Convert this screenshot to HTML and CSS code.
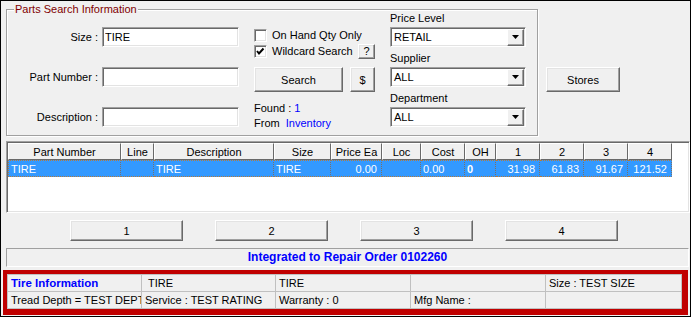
FILE: index.html
```html
<!DOCTYPE html>
<html lang="en">
<head>
    <meta charset="UTF-8">
    <title>Parts Search</title>
    <link rel="stylesheet" href="styles.css">
</head>
<body>
    <div class="window">
        <div class="top">
            <div class="groupbox">
                <span class="legend">Parts Search Information</span>

                <div class="fields">
                    <div class="field-row">
                        <label for="sizeInput">Size :</label>
                        <input type="text" id="sizeInput" class="text-input" value="TIRE">
                    </div>
                    <div class="field-row">
                        <label for="partInput">Part Number :</label>
                        <input type="text" id="partInput" class="text-input">
                    </div>
                    <div class="field-row">
                        <label for="descInput">Description :</label>
                        <input type="text" id="descInput" class="text-input">
                    </div>
                </div>

                <div class="options">
                    <div class="check-row">
                        <span class="checkbox"></span>
                        <span>On Hand Qty Only</span>
                    </div>
                    <div class="check-row">
                        <span class="checkbox">
                            <svg width="11" height="11" viewBox="0 0 11 11"><polyline points="2,5 4,7.5 8.5,2.5" fill="none" stroke="#000" stroke-width="2"/></svg>
                        </span>
                        <span>Wildcard Search</span>
                        <button class="btn btn-help">?</button>
                    </div>
                    <div class="search-row">
                        <button class="btn btn-search">Search</button>
                        <button class="btn btn-dollar">$</button>
                    </div>
                    <div class="found">Found : <span class="blue">1</span></div>
                    <div class="found">From &nbsp;<span class="blue">Inventory</span></div>
                </div>

                <div class="filters">
                    <div class="filter-label">Price Level</div>
                    <div class="combo">
                        <span class="combo-text">RETAIL</span>
                        <span class="combo-btn"><svg width="7" height="4" viewBox="0 0 7 4"><polygon points="0,0 7,0 3.5,4" fill="#000"/></svg></span>
                    </div>
                    <div class="filter-label">Supplier</div>
                    <div class="combo">
                        <span class="combo-text">ALL</span>
                        <span class="combo-btn"><svg width="7" height="4" viewBox="0 0 7 4"><polygon points="0,0 7,0 3.5,4" fill="#000"/></svg></span>
                    </div>
                    <div class="filter-label">Department</div>
                    <div class="combo">
                        <span class="combo-text">ALL</span>
                        <span class="combo-btn"><svg width="7" height="4" viewBox="0 0 7 4"><polygon points="0,0 7,0 3.5,4" fill="#000"/></svg></span>
                    </div>
                </div>
            </div>
            <button class="btn btn-stores">Stores</button>
        </div>

        <div class="grid">
            <table class="parts-table">
                <colgroup>
                    <col style="width:113px"><col style="width:33px"><col style="width:120px"><col style="width:57px">
                    <col style="width:51px"><col style="width:39px"><col style="width:44px"><col style="width:31px">
                    <col style="width:44px"><col style="width:44px"><col style="width:44px"><col style="width:44px">
                </colgroup>
                <thead>
                    <tr>
                        <th>Part Number</th><th>Line</th><th>Description</th><th>Size</th>
                        <th>Price Ea</th><th>Loc</th><th>Cost</th><th>OH</th>
                        <th>1</th><th>2</th><th>3</th><th>4</th>
                    </tr>
                </thead>
                <tbody>
                    <tr class="selected">
                        <td>TIRE</td><td></td><td>TIRE</td><td>TIRE</td>
                        <td class="num">0.00</td><td></td><td>0.00</td><td class="bold">0</td>
                        <td class="num">31.98</td><td class="num">61.83</td><td class="num">91.67</td><td class="num">121.52</td>
                    </tr>
                </tbody>
            </table>
        </div>

        <div class="price-buttons">
            <button class="btn btn-price">1</button>
            <button class="btn btn-price">2</button>
            <button class="btn btn-price">3</button>
            <button class="btn btn-price">4</button>
        </div>

        <div class="status">Integrated to Repair Order 0102260</div>

        <div class="tire-frame">
            <table class="tire-table">
                <colgroup>
                    <col style="width:134px"><col style="width:134px"><col style="width:135px"><col style="width:135px"><col style="width:136px">
                </colgroup>
                <tr>
                    <td class="tire-title">Tire Information</td>
                    <td>&nbsp;TIRE</td>
                    <td>TIRE</td>
                    <td></td>
                    <td>Size : TEST SIZE</td>
                </tr>
                <tr>
                    <td>Tread Depth = TEST DEPTH</td>
                    <td>Service : TEST RATING</td>
                    <td>Warranty : 0</td>
                    <td>Mfg Name :</td>
                    <td></td>
                </tr>
            </table>
        </div>
    </div>
</body>
</html>
```

FILE: styles.css
```css
body {
    margin: 0;
    font-family: "Liberation Sans", Arial, sans-serif;
    font-size: 11px;
    color: #000;
}
.window {
    width: 691px;
    height: 317px;
    box-sizing: border-box;
    border: 1px solid #000;
    background: #f0f0f0;
    overflow: hidden;
}
.top {
    display: flex;
    align-items: flex-start;
}
.groupbox {
    position: relative;
    display: flex;
    margin: 8px 0 0 5px;
    width: 532px;
    height: 127px;
    box-sizing: border-box;
    border: 1px solid #a0a0a0;
    box-shadow: inset 1px 1px 0 #fff, 1px 1px 0 #fff;
}
.legend {
    position: absolute;
    top: -8px;
    left: 7px;
    padding: 0 1px;
    background: #f0f0f0;
    color: #800000;
    font-size: 11px;
    line-height: 14px;
}
.fields {
    display: flex;
    flex-direction: column;
    gap: 20px;
    padding-top: 17px;
}
.field-row {
    display: flex;
    align-items: center;
    gap: 4px;
    height: 20px;
}
.field-row label {
    width: 91px;
    text-align: right;
}
.text-input {
    width: 137px;
    height: 20px;
    box-sizing: border-box;
    margin: 0;
    padding: 0 2px;
    font-family: inherit;
    font-size: 11px;
    background: #fff;
    border: 1px solid;
    border-color: #a0a0a0 #fff #fff #a0a0a0;
    box-shadow: inset 1px 1px 0 #696969, inset -1px -1px 0 #e3e3e3;
    outline: none;
}
.btn {
    margin: 0;
    padding: 0;
    font-family: inherit;
    font-size: 11px;
    color: #000;
    background: #f0f0f0;
    box-sizing: border-box;
    border: 1px solid;
    border-color: #fff #696969 #696969 #fff;
    box-shadow: inset -1px -1px 0 #a0a0a0, inset 1px 1px 0 #e3e3e3;
    cursor: pointer;
}
.options {
    display: flex;
    flex-direction: column;
    width: 121px;
    margin-left: 15px;
    padding-top: 17px;
}
.check-row {
    display: flex;
    align-items: center;
    gap: 5px;
    height: 16px;
    white-space: nowrap;
}
.checkbox {
    display: flex;
    align-items: center;
    justify-content: center;
    flex: none;
    width: 13px;
    height: 13px;
    box-sizing: border-box;
    background: #fff;
    border: 1px solid;
    border-color: #a0a0a0 #fff #fff #a0a0a0;
    box-shadow: inset 1px 1px 0 #696969, inset -1px -1px 0 #e3e3e3;
}
.btn-help {
    margin-left: auto;
    flex: none;
    width: 17px;
    height: 15px;
    line-height: 12px;
}
.search-row {
    display: flex;
    margin-top: 8px;
    height: 25px;
}
.btn-search {
    width: 89px;
    height: 25px;
}
.btn-dollar {
    margin-left: auto;
    width: 25px;
    height: 25px;
}
.found {
    line-height: 15px;
}
.search-row + .found {
    margin-top: 9px;
}
.blue {
    color: #0000ff;
}
.filters {
    display: flex;
    flex-direction: column;
    width: 136px;
    margin-left: 15px;
    padding-top: 2px;
}
.filter-label {
    line-height: 13px;
    margin-bottom: 2px;
}
.combo + .filter-label {
    margin-top: 5px;
}
.combo {
    display: flex;
    align-items: center;
    height: 20px;
    box-sizing: border-box;
    background: #fff;
    border: 1px solid;
    border-color: #a0a0a0 #fff #fff #a0a0a0;
    box-shadow: inset 1px 1px 0 #696969, inset -1px -1px 0 #e3e3e3;
    padding: 1px;
}
.combo-text {
    flex: 1;
    padding-left: 2px;
}
.combo-btn {
    display: flex;
    align-items: center;
    justify-content: center;
    width: 17px;
    height: 17px;
    box-sizing: border-box;
    background: #f0f0f0;
    border: 1px solid;
    border-color: #fff #696969 #696969 #fff;
    box-shadow: inset -1px -1px 0 #a0a0a0;
}
.btn-stores {
    margin: 66px 0 0 8px;
    width: 74px;
    height: 25px;
}
.grid {
    margin: 5px 0 0 5px;
    width: 684px;
    height: 72px;
    box-sizing: border-box;
    background: #fff;
    border: 1px solid;
    border-color: #a0a0a0 #fff #fff #a0a0a0;
    box-shadow: inset 1px 1px 0 #696969, inset -1px -1px 0 #e3e3e3;
    padding: 1px;
}
.parts-table {
    table-layout: fixed;
    width: 664px;
    border-collapse: separate;
    border-spacing: 0;
}
.parts-table th {
    height: 17px;
    padding: 0;
    box-sizing: border-box;
    font-weight: normal;
    text-align: center;
    background: #f0f0f0;
    border: 1px solid;
    border-color: #fff #696969 #696969 #fff;
    white-space: nowrap;
    overflow: hidden;
}
.parts-table td {
    height: 17px;
    padding: 0 2px;
    box-sizing: border-box;
    white-space: nowrap;
    overflow: hidden;
}
.selected td {
    background: #3399ff;
    color: #fff;
    border-top: 1px dotted #b47a3c;
    border-bottom: 1px dotted #b47a3c;
    border-right: 1px dotted #7d7066;
}
.selected td:first-child {
    border-left: 1px dotted #b47a3c;
}
.parts-table td.num {
    text-align: right;
    padding-right: 4px;
}
.parts-table td.bold {
    font-weight: bold;
}
.price-buttons {
    display: flex;
    gap: 32px;
    margin-top: 7px;
    padding-left: 69px;
}
.btn-price {
    width: 113px;
    height: 21px;
}
.status {
    margin: 7px 0 0 5px;
    width: 683px;
    height: 19px;
    box-sizing: border-box;
    border: 1px solid;
    border-color: #a0a0a0 #fff #fff #a0a0a0;
    color: #0000ff;
    font-weight: bold;
    font-size: 12px;
    line-height: 17px;
    text-align: center;
}
.tire-frame {
    margin: 3px 0 0 2px;
    width: 685px;
    height: 45px;
    box-sizing: border-box;
    border: 4px solid #c00000;
    background: #c00000;
}
.tire-table {
    table-layout: fixed;
    width: 674px;
    border-collapse: collapse;
    background: #f0f0f0;
    border-top: 1px solid #696969;
    border-right: 1px solid #000;
    border-bottom: 1px solid #000;
}
.tire-table td {
    height: 16px;
    padding: 0 3px;
    line-height: 15px;
    border: 1px solid #c0c0c0;
    white-space: nowrap;
    overflow: hidden;
}
.tire-table td.tire-title {
    color: #0000ff;
    font-weight: bold;
    font-size: 11.5px;
}
```
